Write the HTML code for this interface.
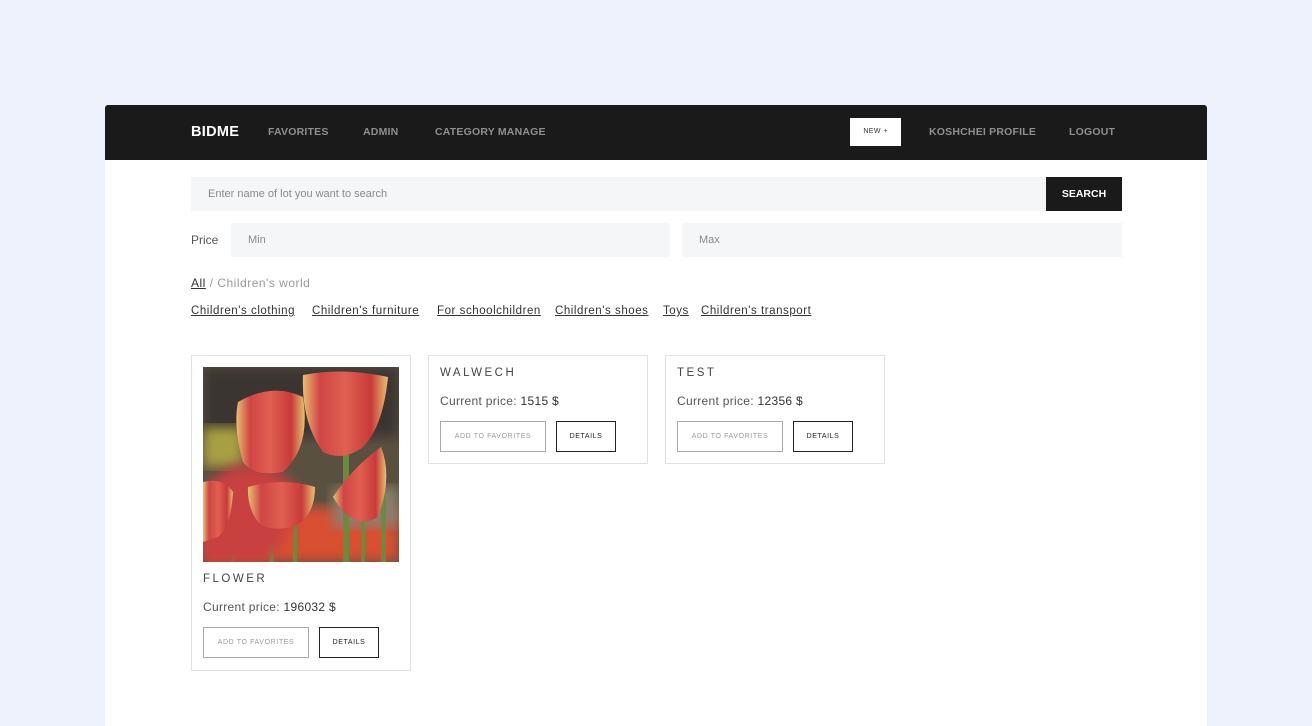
<!DOCTYPE html>
<html><head><meta charset="utf-8"><style>
*{margin:0;padding:0;box-sizing:border-box}
body{width:1312px;height:726px;background:#edf2fd;font-family:"Liberation Sans",sans-serif;position:relative;overflow:hidden;color:#333}
.a{position:absolute;white-space:nowrap}
#main{position:absolute;left:105px;top:105px;width:1102px;height:621px;background:#fff}
#nav{position:absolute;left:105px;top:105px;width:1102px;height:55px;background:#1a1a1a;border-radius:3px 3px 0 0}
.nl{font-size:10.5px;font-weight:bold;color:#8f8f8f;letter-spacing:.2px;top:126px}
.inp{position:absolute;background:#f5f6f8;color:#8a8a8a;font-size:11px;padding-left:17px;line-height:34px;height:34px}
.lk{top:305px;font-size:11.5px;color:#333;text-decoration:underline;letter-spacing:.55px}
.card{position:absolute;border:1px solid #e2e2e2;background:#fff}
.t{font-size:11.5px;letter-spacing:2.5px;color:#444}
.p{font-size:12px;color:#555;letter-spacing:.3px}
.p b{font-weight:normal;color:#333}
.b1,.b2{position:absolute;height:31px;font-size:7px;letter-spacing:.6px;text-align:center;line-height:29px}
.b1{width:106px;border:1.5px solid #aaa;color:#999}
.b2{width:60px;border:1.5px solid #222;color:#222}
</style></head><body>
<div id="main"></div>
<div id="nav"></div>
<div class="a" style="left:191px;top:124px;font-size:14.5px;color:#fff;font-weight:bold;letter-spacing:.3px">BIDME</div>
<div class="a nl" style="left:268px">FAVORITES</div>
<div class="a nl" style="left:363px">ADMIN</div>
<div class="a nl" style="left:435px">CATEGORY MANAGE</div>
<div class="a" style="left:850px;top:118px;width:51px;height:28px;background:#fff;font-size:7px;color:#333;text-align:center;line-height:28px;letter-spacing:.4px">NEW +</div>
<div class="a nl" style="left:929px">KOSHCHEI PROFILE</div>
<div class="a nl" style="left:1069px">LOGOUT</div>

<div class="inp" style="left:191px;top:177px;width:856px">Enter name of lot you want to search</div>
<div class="a" style="left:1046px;top:177px;width:76px;height:34px;background:#1a1a1a;color:#fff;font-size:10.5px;font-weight:bold;text-align:center;line-height:34px">SEARCH</div>
<div class="a" style="left:191px;top:233px;font-size:12px;color:#555">Price</div>
<div class="inp" style="left:231px;top:223px;width:439px">Min</div>
<div class="inp" style="left:682px;top:223px;width:440px">Max</div>

<div class="a" style="left:191px;top:276px;font-size:12px;color:#999;letter-spacing:.5px"><span style="color:#333;text-decoration:underline">All</span> / Children's world</div>
<div class="a lk" style="left:191px">Children's clothing</div>
<div class="a lk" style="left:312px">Children's furniture</div>
<div class="a lk" style="left:437px">For schoolchildren</div>
<div class="a lk" style="left:555px">Children's shoes</div>
<div class="a lk" style="left:663px">Toys</div>
<div class="a lk" style="left:701px">Children's transport</div>

<div class="card" style="left:191px;top:355px;width:220px;height:316px"></div>
<svg class="a" style="left:203px;top:367px" width="196" height="195" viewBox="0 0 196 195">
<defs><filter id="bl"><feGaussianBlur stdDeviation="6"/></filter>
<linearGradient id="tg" x1="0" x2="1"><stop offset="0" stop-color="#e8c070"/><stop offset=".2" stop-color="#d04545"/><stop offset=".5" stop-color="#e06050"/><stop offset=".8" stop-color="#c83a3a"/><stop offset="1" stop-color="#e8c070"/></linearGradient></defs>
<rect width="196" height="195" fill="#5a5040"/>
<rect width="196" height="70" fill="#3a3530" filter="url(#bl)"/>
<rect x="0" y="60" width="40" height="40" fill="#a8a040" filter="url(#bl)"/>
<rect y="140" width="196" height="55" fill="#d85030" filter="url(#bl)"/>
<rect x="130" y="120" width="66" height="40" fill="#8a8070" filter="url(#bl)"/>
<g fill="#6a8a40"><rect x="140" y="88" width="6" height="107"/><rect x="178" y="110" width="5" height="85"/><rect x="66" y="160" width="5" height="35"/><rect x="28" y="150" width="4" height="45"/><rect x="158" y="140" width="4" height="55"/><rect x="90" y="150" width="4" height="45"/></g>
<path d="M8 115 Q40 80 90 115 Q100 160 60 195 L0 195 L0 125Z" fill="#c84040" filter="url(#bl)"/>
<path d="M35 35 Q70 15 100 30 Q108 80 80 105 Q50 110 40 95 Q30 60 35 35Z" fill="url(#tg)"/>
<path d="M130 130 Q150 100 178 80 Q190 110 175 150 Q150 165 130 130Z" fill="url(#tg)"/>
<path d="M100 8 Q140 0 185 10 Q180 60 160 80 Q140 95 120 85 Q98 55 100 8Z" fill="url(#tg)"/>
<path d="M0 115 Q20 110 30 125 Q28 160 15 170 L0 175Z" fill="url(#tg)"/>
<path d="M45 120 Q80 110 112 120 Q112 150 90 160 Q65 165 55 155 Q44 140 45 120Z" fill="url(#tg)"/>
</svg>
<div class="a t" style="left:203px;top:573px">FLOWER</div>
<div class="a p" style="left:203px;top:600px">Current price: <b>196032 $</b></div>
<div class="b1" style="left:203px;top:627px">ADD TO FAVORITES</div>
<div class="b2" style="left:319px;top:627px">DETAILS</div>

<div class="card" style="left:428px;top:355px;width:220px;height:109px"></div>
<div class="a t" style="left:440px;top:367px">WALWECH</div>
<div class="a p" style="left:440px;top:394px">Current price: <b>1515 $</b></div>
<div class="b1" style="left:440px;top:421px">ADD TO FAVORITES</div>
<div class="b2" style="left:556px;top:421px">DETAILS</div>

<div class="card" style="left:665px;top:355px;width:220px;height:109px"></div>
<div class="a t" style="left:677px;top:367px">TEST</div>
<div class="a p" style="left:677px;top:394px">Current price: <b>12356 $</b></div>
<div class="b1" style="left:677px;top:421px">ADD TO FAVORITES</div>
<div class="b2" style="left:793px;top:421px">DETAILS</div>
</body></html>
